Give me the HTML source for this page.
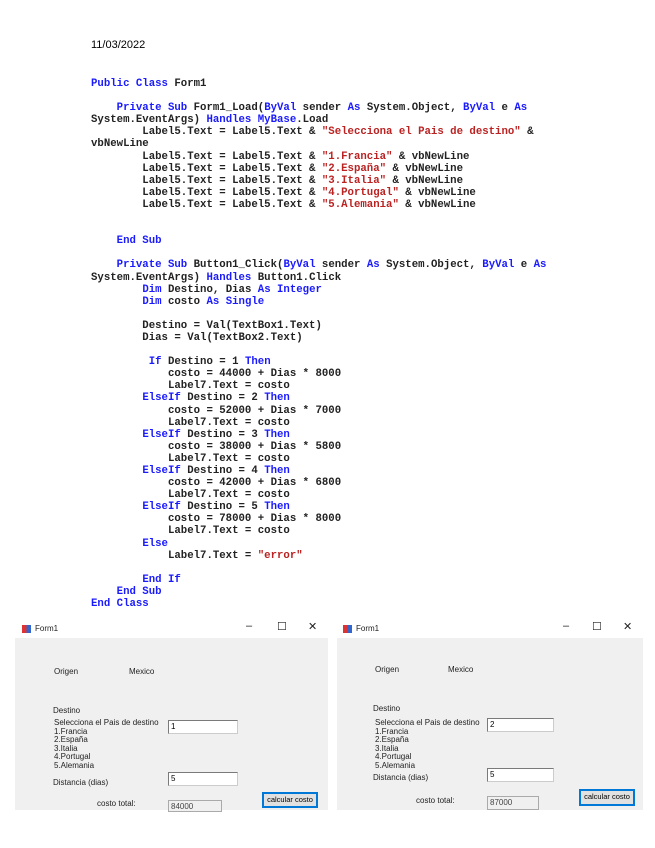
<!DOCTYPE html>
<html><head><meta charset="utf-8"><style>
body{margin:0;width:655px;height:848px;background:#fff;position:relative;overflow:hidden;font-family:"Liberation Sans",sans-serif}
.date{position:absolute;left:91px;top:39px;font-size:11px;color:#000}
pre{position:absolute;left:91px;top:78px;margin:0;font-family:"Liberation Mono",monospace;font-weight:bold;font-size:10.7px;line-height:12.1px;color:#222}
.k{color:#1a1aff}.s{color:#b22}
.cl{position:absolute;background:#f0f0f0}
.a{position:absolute;font-size:8px;color:#222;white-space:nowrap;line-height:8.5px}
.tb{position:absolute;background:#fff;border:1px solid #7a7a7a;border-bottom-color:#ccc;border-right-color:#ccc;box-sizing:border-box;font-size:8px;padding-left:2px;line-height:12px}
.ro{position:absolute;background:#f0f0f0;border:1px solid #aaa;box-sizing:border-box;font-size:8px;padding-left:2px;line-height:11px;color:#444}
.bt{position:absolute;background:#e1e1e1;border:2px solid #0078d7;box-sizing:border-box;font-size:7.5px;text-align:center;line-height:12px}
.ic{position:absolute;width:9px;height:8px;background:linear-gradient(90deg,#d33 50%,#36c 50%)}
.ti{position:absolute;font-size:8px;color:#222}
.ctl{position:absolute;font-size:11px;color:#222}
</style></head><body>
<div class="date">11/03/2022</div>
<pre><span class="k">Public Class</span> Form1

    <span class="k">Private Sub</span> Form1_Load(<span class="k">ByVal</span> sender <span class="k">As</span> System.Object, <span class="k">ByVal</span> e <span class="k">As</span>
System.EventArgs) <span class="k">Handles MyBase</span>.Load
        Label5.Text = Label5.Text &amp; <span class="s">"Selecciona el Pais de destino"</span> &amp;
vbNewLine
        Label5.Text = Label5.Text &amp; <span class="s">"1.Francia"</span> &amp; vbNewLine
        Label5.Text = Label5.Text &amp; <span class="s">"2.España"</span> &amp; vbNewLine
        Label5.Text = Label5.Text &amp; <span class="s">"3.Italia"</span> &amp; vbNewLine
        Label5.Text = Label5.Text &amp; <span class="s">"4.Portugal"</span> &amp; vbNewLine
        Label5.Text = Label5.Text &amp; <span class="s">"5.Alemania"</span> &amp; vbNewLine


    <span class="k">End Sub</span>

    <span class="k">Private Sub</span> Button1_Click(<span class="k">ByVal</span> sender <span class="k">As</span> System.Object, <span class="k">ByVal</span> e <span class="k">As</span>
System.EventArgs) <span class="k">Handles</span> Button1.Click
        <span class="k">Dim</span> Destino, Dias <span class="k">As Integer</span>
        <span class="k">Dim</span> costo <span class="k">As Single</span>

        Destino = Val(TextBox1.Text)
        Dias = Val(TextBox2.Text)

         <span class="k">If</span> Destino = 1 <span class="k">Then</span>
            costo = 44000 + Dias * 8000
            Label7.Text = costo
        <span class="k">ElseIf</span> Destino = 2 <span class="k">Then</span>
            costo = 52000 + Dias * 7000
            Label7.Text = costo
        <span class="k">ElseIf</span> Destino = 3 <span class="k">Then</span>
            costo = 38000 + Dias * 5800
            Label7.Text = costo
        <span class="k">ElseIf</span> Destino = 4 <span class="k">Then</span>
            costo = 42000 + Dias * 6800
            Label7.Text = costo
        <span class="k">ElseIf</span> Destino = 5 <span class="k">Then</span>
            costo = 78000 + Dias * 8000
            Label7.Text = costo
        <span class="k">Else</span>
            Label7.Text = <span class="s">"error"</span>

        <span class="k">End If</span>
    <span class="k">End Sub</span>
<span class="k">End Class</span></pre>

<!-- left window -->
<div class="cl" style="left:15px;top:638px;width:313px;height:172px"></div>
<div class="ic" style="left:22px;top:625px"></div>
<div class="ti" style="left:35px;top:624px">Form1</div>
<div class="ctl" style="left:246px;top:620px">–</div>
<div class="ctl" style="left:277px;top:620px">☐</div>
<div class="ctl" style="left:308px;top:620px">✕</div>
<div class="a" style="left:54px;top:668px">Origen</div>
<div class="a" style="left:129px;top:668px">Mexico</div>
<div class="a" style="left:53px;top:707px">Destino</div>
<div class="a" style="left:54px;top:719px">Selecciona el Pais de destino<br>1.Francia<br>2.España<br>3.Italia<br>4.Portugal<br>5.Alemania</div>
<div class="tb" style="left:168px;top:720px;width:70px;height:14px">1</div>
<div class="tb" style="left:168px;top:772px;width:70px;height:14px">5</div>
<div class="a" style="left:53px;top:779px">Distancia (dias)</div>
<div class="a" style="left:97px;top:800px">costo total:</div>
<div class="ro" style="left:168px;top:800px;width:54px;height:12px">84000</div>
<div class="bt" style="left:262px;top:792px;width:56px;height:16px">calcular costo</div>

<!-- right window -->
<div class="cl" style="left:337px;top:638px;width:306px;height:172px"></div>
<div class="ic" style="left:343px;top:625px"></div>
<div class="ti" style="left:356px;top:624px">Form1</div>
<div class="ctl" style="left:563px;top:620px">–</div>
<div class="ctl" style="left:592px;top:620px">☐</div>
<div class="ctl" style="left:623px;top:620px">✕</div>
<div class="a" style="left:375px;top:666px">Origen</div>
<div class="a" style="left:448px;top:666px">Mexico</div>
<div class="a" style="left:373px;top:705px">Destino</div>
<div class="a" style="left:375px;top:719px">Selecciona el Pais de destino<br>1.Francia<br>2.España<br>3.Italia<br>4.Portugal<br>5.Alemania</div>
<div class="tb" style="left:487px;top:718px;width:67px;height:14px">2</div>
<div class="tb" style="left:487px;top:768px;width:67px;height:14px">5</div>
<div class="a" style="left:373px;top:774px">Distancia (dias)</div>
<div class="a" style="left:416px;top:797px">costo total:</div>
<div class="ro" style="left:487px;top:796px;width:52px;height:14px">87000</div>
<div class="bt" style="left:579px;top:789px;width:56px;height:17px">calcular costo</div>
</body></html>
